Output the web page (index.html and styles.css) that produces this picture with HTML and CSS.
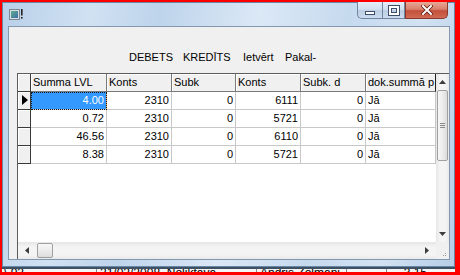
FILE: index.html
```html
<!DOCTYPE html>
<html>
<head>
<meta charset="utf-8">
<link rel="stylesheet" href="styles.css">
</head>
<body>
<div class="screen">
  <div class="win">
    <div class="titlebar">
      <svg class="appicon" width="15" height="13" viewBox="0 0 15 13">
        <defs>
          <linearGradient id="ig" x1="0" y1="0" x2="1" y2="1">
            <stop offset="0" stop-color="#5fae8e"/>
            <stop offset="1" stop-color="#3d6fa8"/>
          </linearGradient>
        </defs>
        <rect x="0.5" y="1.5" width="10" height="10" fill="#d8dde4" stroke="#7d8794"/>
        <rect x="2" y="3" width="7" height="7" fill="url(#ig)"/>
        <rect x="12" y="1" width="1.6" height="6.5" fill="#222"/>
        <rect x="12" y="9" width="1.6" height="1.6" fill="#222"/>
      </svg>
      <div class="capbtns">
        <div class="cb cb-min"><span class="g-min"></span></div>
        <div class="cb cb-max"><span class="g-max"></span></div>
        <div class="cb cb-close">
          <svg width="12" height="10" viewBox="0 0 12 10">
            <path d="M2 1 L10 9 M10 1 L2 9" stroke="#5a1e12" stroke-width="3.6" stroke-linecap="square"/>
            <path d="M2 1 L10 9 M10 1 L2 9" stroke="#fff" stroke-width="2" stroke-linecap="square"/>
          </svg>
        </div>
      </div>
    </div>
    <div class="client">
      <div class="toolbar">
        <span class="tb tb1">DEBETS</span>
        <span class="tb tb2">KREDĪTS</span>
        <span class="tb tb3">Ietvērt</span>
        <span class="tb">Pakal-</span>
      </div>
      <div class="dbgrid">
        <div class="cells">
          <div class="hdr ind"></div>
          <div class="hdr">Summa LVL</div>
          <div class="hdr">Konts</div>
          <div class="hdr">Subk</div>
          <div class="hdr">Konts</div>
          <div class="hdr">Subk. d</div>
          <div class="hdr last">dok.summā p</div>

          <div class="ind">
            <svg width="12" height="17" viewBox="0 0 12 17"><polygon points="4,3 4,13 10,8" fill="#000"/></svg>
          </div>
          <div class="c n sel"><span>4.00</span></div>
          <div class="c n">2310</div>
          <div class="c n">0</div>
          <div class="c n">6111</div>
          <div class="c n">0</div>
          <div class="c">Jā</div>

          <div class="ind"></div>
          <div class="c n">0.72</div>
          <div class="c n">2310</div>
          <div class="c n">0</div>
          <div class="c n">5721</div>
          <div class="c n">0</div>
          <div class="c">Jā</div>

          <div class="ind"></div>
          <div class="c n">46.56</div>
          <div class="c n">2310</div>
          <div class="c n">0</div>
          <div class="c n">6110</div>
          <div class="c n">0</div>
          <div class="c">Jā</div>

          <div class="ind"></div>
          <div class="c n">8.38</div>
          <div class="c n">2310</div>
          <div class="c n">0</div>
          <div class="c n">5721</div>
          <div class="c n">0</div>
          <div class="c">Jā</div>
        </div>
        <div class="vscroll">
          <div class="sb-btn sb-up"><svg width="7" height="4" viewBox="0 0 7 4"><polygon points="0,4 7,4 3.5,0" fill="#3c3c3c"/></svg></div>
          <div class="thumb-v"><span class="gl"></span><span class="gl"></span><span class="gl"></span></div>
          <div class="track"></div>
          <div class="sb-btn sb-down"><svg width="7" height="4" viewBox="0 0 7 4"><polygon points="0,0 7,0 3.5,4" fill="#3c3c3c"/></svg></div>
        </div>
        <div class="hscroll">
          <div class="sb-btn-h"><svg width="4" height="7" viewBox="0 0 4 7"><polygon points="4,0 4,7 0,3.5" fill="#3c3c3c"/></svg></div>
          <div class="thumb-h"></div>
          <div class="track"></div>
          <div class="sb-btn-h"><svg width="4" height="7" viewBox="0 0 4 7"><polygon points="0,0 0,7 4,3.5" fill="#3c3c3c"/></svg></div>
        </div>
        <div class="grip">
          <svg width="13" height="17" viewBox="0 0 13 17">
            <rect x="9" y="11" width="1" height="1" fill="#9a9a9a"/>
            <rect x="9" y="13" width="1" height="1" fill="#9a9a9a"/>
            <rect x="7" y="13" width="1" height="1" fill="#9a9a9a"/>
          </svg>
        </div>
      </div>
    </div>
  </div>
  <div class="behind">
    <span class="bc bc1">\ 92</span>
    <span class="bc bc2">21/02/2008&nbsp; Noliktava</span>
    <span class="bc bc3">Andris Zolmani</span>
    <span class="bc bc4"></span>
    <span class="bc bc5">3.15</span>
  </div>
</div>
</body>
</html>
```

FILE: styles.css
```css
* { box-sizing: border-box; }
html, body { margin: 0; padding: 0; }
body {
  width: 460px;
  height: 275px;
  overflow: hidden;
  background: #fff;
  font-family: "Liberation Sans", Arial, sans-serif;
  font-size: 11px;
  color: #000;
}
.screen {
  width: 460px;
  height: 275px;
  border-style: solid;
  border-color: #f00;
  border-width: 2px 5px 3px 2px;
  display: flex;
  flex-direction: column;
}
.win {
  height: 265px;
  flex: none;
  border: 1px solid #6a86a5;
  display: flex;
  flex-direction: column;
  background: linear-gradient(100deg, #b9d0e9 0%, #d0e1f2 18%, #bed4eb 32%, #dbe8f6 52%, #c6daee 70%, #d2e2f2 85%, #b7cee7 100%);
}
.titlebar {
  height: 23px;
  flex: none;
  display: flex;
  align-items: flex-start;
}
.appicon { margin: 5px 0 0 6px; }
.capbtns {
  margin-left: auto;
  margin-right: 6px;
  margin-top: -1px;
  display: flex;
  height: 17px;
}
.cb {
  height: 17px;
  display: flex;
  align-items: center;
  justify-content: center;
  border: 1px solid #6f86a2;
  border-top: none;
}
.cb-min {
  width: 25px;
  border-radius: 0 0 0 5px;
  border-right: none;
  background: linear-gradient(180deg, #e6eef8 0%, #d3e0ef 45%, #bccee4 55%, #cddcee 100%);
  align-items: flex-end;
  padding-bottom: 3px;
}
.cb-max {
  width: 23px;
  background: linear-gradient(180deg, #e6eef8 0%, #d3e0ef 45%, #bccee4 55%, #cddcee 100%);
}
.cb-close {
  width: 43px;
  border-radius: 0 0 5px 0;
  border-color: #8a3a2c;
  border-left: 1px solid #8a3a2c;
  background: linear-gradient(180deg, #e8a898 0%, #d8806c 45%, #c4503b 55%, #d06a52 100%);
}
.g-min {
  display: block;
  width: 10px;
  height: 4px;
  background: #fff;
  border: 1px solid #3c4f66;
}
.g-max {
  display: block;
  width: 10px;
  height: 9px;
  border: 2px solid #fff;
  outline: 1px solid #3c4f66;
  box-shadow: inset 0 0 0 1px #3c4f66;
}
.client {
  flex: 1;
  margin: 0 4px 6px 5px;
  border: 1px solid #8397ae;
  background: #f0f0f0;
  display: flex;
  flex-direction: column;
  min-height: 0;
}
.toolbar {
  height: 46px;
  flex: none;
  padding: 24px 0 0 120px;
  line-height: 13px;
  display: flex;
}
.tb { white-space: nowrap; }
.tb1 { width: 54px; }
.tb2 { width: 60px; }
.tb3 { width: 42px; }
.dbgrid {
  flex: 1;
  min-height: 0;
  margin-left: 8px;
  border-left: 1px solid #5c5c5c;
  border-top: 1px solid #5c5c5c;
  display: grid;
  grid-template-columns: 1fr 13px;
  grid-template-rows: 1fr 17px;
  background: #fff;
}
.cells {
  grid-column: 1;
  grid-row: 1;
  display: grid;
  grid-template-columns: 13px 76px 65px 64px 65px 65px 70px;
  grid-auto-rows: 18px;
  align-content: start;
  background: #fff;
  line-height: 17px;
  overflow: hidden;
}
.hdr {
  background: #f0f0f0;
  border-right: 1px solid #7a7a7a;
  border-bottom: 1px solid #7a7a7a;
  box-shadow: inset 1px 1px 0 #fff;
  padding: 0 2px;
  white-space: nowrap;
  overflow: hidden;
}
.hdr.last { border-right-color: #222; box-shadow: inset 1px 1px 0 #fff, inset 0 1px 0 #222; }
.ind {
  background: #f0f0f0;
  border-right: 1px solid #3a3a3a;
  border-bottom: 1px solid #3a3a3a;
  box-shadow: inset 1px 1px 0 #fff;
  padding: 0;
}
.ind svg { display: block; }
.c {
  border-right: 1px solid #c8c8c8;
  border-bottom: 1px solid #c8c8c8;
  padding: 0 2px;
  white-space: nowrap;
  overflow: hidden;
}
.n { text-align: right; }
.sel {
  background: #3399ff;
  color: #fff;
  outline: 1px dotted #1a1a1a;
  outline-offset: -1px;
  border-right-color: #e8a060;
}
.vscroll {
  grid-column: 2;
  grid-row: 1;
  display: flex;
  flex-direction: column;
  background: linear-gradient(90deg, #e6e6e6 0%, #f4f4f4 30%, #f4f4f4 75%, #e9e9e9 100%);
}
.sb-btn {
  height: 16px;
  flex: none;
  display: flex;
  align-items: center;
  justify-content: center;
}
.sb-down { height: 17px; }
.thumb-v {
  height: 71px;
  flex: none;
  margin: 0 1px;
  border: 1px solid #a0a0a0;
  border-radius: 2px;
  background: linear-gradient(90deg, #f7f7f7 0%, #ececec 50%, #dcdcdc 100%);
  display: flex;
  flex-direction: column;
  justify-content: center;
  align-items: center;
  gap: 1px;
}
.gl {
  display: block;
  width: 5px;
  height: 1px;
  background: #8a8a8a;
}
.track { flex: 1; }
.hscroll {
  grid-column: 1;
  grid-row: 2;
  display: flex;
  background: linear-gradient(180deg, #e6e6e6 0%, #f4f4f4 30%, #f4f4f4 75%, #e9e9e9 100%);
}
.sb-btn-h {
  width: 18px;
  flex: none;
  display: flex;
  align-items: center;
  justify-content: center;
}
.thumb-h {
  width: 16px;
  flex: none;
  margin: 1px 0 1px 1px;
  border: 1px solid #a0a0a0;
  border-radius: 2px;
  background: linear-gradient(180deg, #f7f7f7 0%, #ececec 50%, #dcdcdc 100%);
}
.grip {
  grid-column: 2;
  grid-row: 2;
  background: #f0f0f0;
}
.grip svg { display: block; }
.behind {
  flex: 1;
  min-height: 0;
  overflow: hidden;
  border-top: 2px solid #3e5064;
  background: #f4f4f4;
  display: flex;
  font-size: 12px;
  line-height: 14px;
  color: #000;
}
.bc {
  display: block;
  margin-top: -3px;
  white-space: nowrap;
  overflow: hidden;
  border-right: 1px solid #8a8a8a;
}
.bc1 { width: 95px; padding-left: 2px; }
.bc2 { width: 160px; padding-left: 3px; }
.bc3 { width: 90px; padding-left: 3px; }
.bc4 { width: 40px; }
.bc5 { width: 40px; text-align: right; padding-right: 0; border-right: none; }
```
